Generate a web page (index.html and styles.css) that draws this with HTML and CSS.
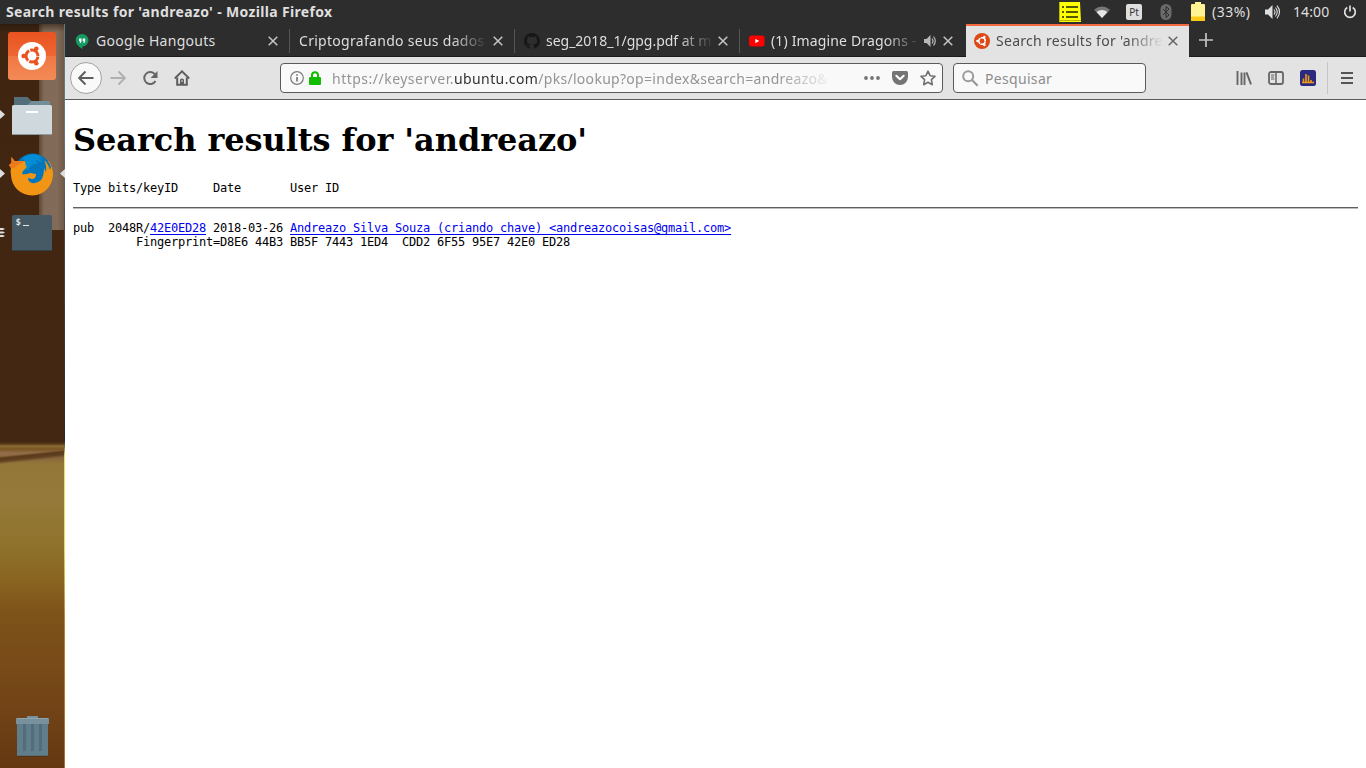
FILE: index.html
```html
<!DOCTYPE html>
<html lang="pt-BR">
<head>
<meta charset="utf-8">
<title>Search results for 'andreazo'</title>
<link rel="stylesheet" href="styles.css">
</head>
<body>
<svg class="defs" width="0" height="0">
  <symbol id="close" viewBox="0 0 10 10"><path d="M.7.7l8.6 8.6M9.3.7L.7 9.3" fill="none" stroke="currentColor" stroke-width="1.5"/></symbol>
  <symbol id="cof" viewBox="0 0 24 24">
    <circle cx="12" cy="12" r="6" fill="none" stroke="currentColor" stroke-width="3" stroke-dasharray="11.4 1.166" stroke-dashoffset="-.6"/>
    <g fill="currentColor" class="gapline" stroke-width="1"><circle cx="3.6" cy="12" r="2.3"/><circle cx="16.3" cy="4.8" r="2.3"/><circle cx="16.3" cy="19.2" r="2.3"/></g>
  </symbol>
</svg>

<header class="panel">
  <span class="wtitle">Search results for 'andreazo' - Mozilla Firefox</span>
  <svg class="note" width="22" height="20" viewBox="0 0 22 20"><path d="M1 0h20l1 20H0z" fill="#ff0"/><path d="M0 18.5h22M.5 0v20" stroke="#b9b900"/><path d="M7 5h12M7 10h12M7 15h12" stroke="#555b00" stroke-width="1.8"/><path d="M3 5h2M3 10h2M3 15h2" stroke="#555b00" stroke-width="1.8"/></svg>
  <svg class="wifi" width="16" height="12" viewBox="0 0 16 12"><path d="M0 3.7Q8-2.700 16 3.700L8 12z" fill="#777"/><path d="M2.500 6Q8 2 13.500 6L8 12z" fill="#e6e6e6"/></svg>
  <span class="kbd">Pt</span>
  <svg class="bt" width="12" height="16" viewBox="0 0 12 16"><rect x=".5" width="11" height="16" rx="5.500" fill="#6b6b6b"/><path d="M3 5l6 6-3 2.500v-11L9 5l-6 6" fill="none" stroke="#2d2d2d"/></svg>
  <svg class="bat" width="14" height="20" viewBox="0 0 14 20"><path d="M4 0h6v2h3q1 0 1 1v15q0 1-1 1H1q-1 0-1-1V3q0-1 1-1h3z" fill="#fff394"/><path d="M0 14.500h14V18q0 1-1 1H1q-1 0-1-1z" fill="#fbc916"/></svg>
  <span class="pct">(33%)</span>
  <svg class="vol" width="16" height="14" viewBox="0 0 16 14"><path d="M0 4.500h3L7.500 0v14L3 9.500H0z" fill="#dfdfdf"/><path d="M9 4.500q2 2.500 0 5M10.500 2.500q3.500 4.500 0 9M12 .7q5 6.300 0 12.600" fill="none" stroke="#dfdfdf" stroke-width="1.100"/></svg>
  <span class="clock">14:00</span>
  <svg class="power" width="14" height="14" viewBox="0 0 14 14"><path d="M4.300 2.500a5.300 5.300 0 1 0 5.400 0M7 .5v6" fill="none" stroke="#dfdfdf" stroke-width="1.700"/></svg>
</header>

<div class="desktop">
<nav class="launcher">
  <svg width="65" height="59" viewBox="0 0 65 59">
    <defs><linearGradient id="og" x2="0" y2="1"><stop stop-color="#ea531f"/><stop offset=".49" stop-color="#ed6634"/><stop offset=".51" stop-color="#f07743"/><stop offset="1" stop-color="#f38b56"/></linearGradient></defs>
    <rect x="8" y="5" width="48" height="48" rx="3" fill="url(#og)"/>
    <circle cx="32" cy="29" r="14" fill="#fff"/><svg class="orange" x="20" y="17" width="24" height="24"><use href="#cof"/></svg>
  </svg>
  <svg width="65" height="59" viewBox="0 0 65 59">
    <path d="M14 12q0-1 1-1h12l4 4h18q1 0 1 1v6H14z" fill="#738e99"/><path d="M14 12q0-1 1-1h12l4.500 4-4 4H14z" fill="#546e7a"/><rect x="12" y="19" width="40" height="30" rx="1.500" fill="#cfd8dc"/><path d="M12 48.500h40" stroke="#8d999f"/><path d="M26 26h12" stroke="#fff" stroke-width="2"/><path d="M0 24l5 4.500L0 33z" fill="#ddd"/>
  </svg>
  <svg width="65" height="59" viewBox="0 0 65 59">
    <path d="M11.500 12l3 4h34q4.500 6 4.500 13a21 21 0 0 1-42 1q-1-4 0-7l-2-3 2.500-2z" fill="#f29514"/>
    <path d="M18 16q6-7.500 14.500-7.500Q46 9 51 22l-1 3q-2-7-6-10 3 6 2 12l-2-4q0 8-3 12-4 4-9 3-4-1-4-5l4 1q4 0 4-5l-6-1q-5 2-8 1l1-3 4-4q-1-3-2-6z" fill="#0277bd"/>
    <path d="M22 14q5-4.500 11-4.500 6 0 10 4l-4-1 3 5-7-3 3 4q-6-1-10 6l-4 1 3-3q-3-3-1-6.500z" fill="#039be5" opacity=".65"/>
    <path d="M11.500 12l3 4h10l-6 4q-3 1-4 3H11l-2-3 2.500-2z" fill="#ef7a1c"/>
    <path d="M0 24l5 4.500L0 33zM65 24l-5 4.500 5 4.500z" fill="#ddd"/>
  </svg>
  <svg width="65" height="59" viewBox="0 0 65 59"><rect x="12" y="11" width="40" height="36" rx="1.500" fill="#455a64"/><path d="M12 46.500h40" stroke="#2f4047"/><text class="prompt" x="15.500" y="21">$</text><path d="M23 21.500h6" stroke="#e0e5e7"/><path d="M0 24h3l2 1-2 1H0zM0 27.500h3l2 1-2 1H0zM0 31h3l2 1-2 1H0z" fill="#ddd"/></svg>
  <svg class="trash" width="65" height="59" viewBox="0 0 65 59"><rect x="27" y="10" width="11" height="3" fill="#78909c"/><path d="M17 17h31v32q0 1-1 1H18q-1 0-1-1z" fill="#607d8b"/><path d="M16 13q0-1 1-1h31q1 0 1 1v5H16z" fill="#78909c"/><path d="M17 12.500h31" stroke="#90a4ae"/><path d="M24.500 18v27M32.500 18v27M40.500 18v27" stroke="#526d79" stroke-width="3"/><path d="M18 50.300h29" stroke="#4e3015"/></svg>
</nav>

<main class="browser">
  <div class="tabs">
    <div class="tab">
      <svg width="16" height="16" viewBox="0 0 16 16"><path d="M8 1a6.300 6.300 0 0 1 .4 12.600V16Q2 12.600 1.700 7.300A6.300 6.300 0 0 1 8 1z" fill="#159b61"/><path d="M5 5.500h2.500v3L6.500 10H5.600l.6-1.700H5zM8.700 5.500h2.500v3L10.200 10h-.9l.6-1.700H8.700z" fill="#fff"/></svg>
      <span class="label l1">Google Hangouts</span><svg class="x"><use href="#close"/></svg>
    </div>
    <div class="tab">
      <span class="label l2">Criptografando seus dados</span><svg class="x"><use href="#close"/></svg>
    </div>
    <div class="tab">
      <svg width="16" height="16" viewBox="0 0 16 16"><path fill="#171717" d="M8 0C3.580 0 0 3.580 0 8c0 3.540 2.290 6.530 5.470 7.590.4.070.55-.17.55-.38v-1.490c-2.230.49-2.700-.95-2.700-.95-.36-.92-.89-1.170-.89-1.170-.73-.5.060-.49.060-.49.8.060 1.230.83 1.230.83.710 1.220 1.870.87 2.330.66.070-.52.280-.87.510-1.070-1.780-.2-3.640-.89-3.640-3.950 0-.87.310-1.590.82-2.150-.08-.2-.36-1.020.08-2.120 0 0 .67-.21 2.200.82a7.700 7.700 0 0 1 4 0c1.530-1.040 2.200-.82 2.200-.82.440 1.100.16 1.920.08 2.120.51.56.82 1.270.82 2.150 0 3.070-1.870 3.750-3.650 3.950.29.25.54.73.54 1.480v2.200c0 .21.150.46.55.38A8 8 0 0 0 8 0z"/></svg>
      <span class="label l3">seg_2018_1/gpg.pdf at m</span><svg class="x"><use href="#close"/></svg>
    </div>
    <div class="tab">
      <svg width="16" height="16" viewBox="0 0 16 16"><rect x="0" y="2.500" width="15.500" height="11" rx="2.500" fill="red"/><path d="M6.300 5.700v4.600l4-2.300z" fill="#fff"/></svg>
      <span class="label l4">(1) Imagine Dragons -</span>
      <svg class="snd" width="14" height="12" viewBox="0 0 14 12"><path d="M0 4h2.500L6.500 0v12l-4-4H0z" fill="#b8b8b8"/><path d="M8 3.500q2 2.500 0 5M9.500 1.500q3.500 4.500 0 9" fill="none" stroke="#b8b8b8" stroke-width="1.200"/></svg><svg class="x"><use href="#close"/></svg>
    </div>
    <div class="tab active">
      <svg width="16" height="16" viewBox="0 0 16 16"><circle cx="8" cy="8" r="8" fill="#dd4814"/><svg class="white" x="1.500" y="1.500" width="13" height="13"><use href="#cof"/></svg></svg>
      <span class="label l5">Search results for 'andre</span><svg class="x"><use href="#close"/></svg>
    </div>
    <svg class="plus" width="14" height="14" viewBox="0 0 14 14"><path d="M7 0v14M0 7h14" stroke="#c4c4c4" stroke-width="1.700"/></svg>
  </div>

  <div class="toolbar">
    <span class="back"><svg width="16" height="16" viewBox="0 0 16 16"><path d="M15.500 8H1.500M7.500 1.500L1.200 8l6.300 6.500" fill="none" stroke="#5e5e5e" stroke-width="1.900"/></svg></span>
    <svg class="fwd" width="16" height="16" viewBox="0 0 16 16"><path d="M.5 8h14M8.500 1.500L14.800 8l-6.300 6.500" fill="none" stroke="#b0b0b0" stroke-width="1.900"/></svg>
    <svg class="gap" width="16" height="16" viewBox="0 0 16 16"><path d="M13 4.400A6 6 0 1 0 13.500 11" fill="none" stroke="#666" stroke-width="2"/><path d="M15.500 1v7h-7z" fill="#666"/></svg>
    <svg class="gap" width="16" height="16" viewBox="0 0 16 16"><path d="M.8 8.500L8 1.300l7.200 7.200" fill="none" stroke="#5e5e5e" stroke-width="1.900"/><path d="M3.200 7.500v7.300h9.600V7.500" fill="none" stroke="#5e5e5e" stroke-width="2"/><path d="M6 15v-5q0-1.500 2-1.500t2 1.500v5z" fill="#5e5e5e"/><path d="M8 10v2" stroke="#ddd"/></svg>
    <div class="url">
      <svg width="14" height="14" viewBox="0 0 14 14"><circle cx="7" cy="7" r="6.300" fill="none" stroke="#7b7b7b" stroke-width="1.200"/><path d="M7 6v4.500M7 3.300v1.500" stroke="#777" stroke-width="1.700"/></svg>
      <svg class="lock" width="12" height="14" viewBox="0 0 12 14"><path d="M3 7V4.200a3 3 0 0 1 6 0V7" fill="none" stroke="#12bc00" stroke-width="2"/><rect y="6" width="12" height="8" rx="1" fill="#12bc00"/></svg>
      <span class="addr"><span class="sub">https://keyserver.</span><b>ubuntu.com</b>/pks/lookup?op=index&amp;search=andreazo&amp;</span>
      <svg width="16" height="16" viewBox="0 0 16 16" fill="#747474"><circle cx="2" cy="8" r="1.900"/><circle cx="8" cy="8" r="1.900"/><circle cx="14" cy="8" r="1.900"/></svg>
      <svg class="pocket" width="16" height="16" viewBox="0 0 16 16"><path d="M1.500 1h13Q16 1 16 2.500V7a8 8 0 0 1-16 0V2.500Q0 1 1.500 1z" fill="#747474"/><path d="M4.300 5.800L8 9.300l3.700-3.500" fill="none" stroke="#fff" stroke-width="2" stroke-linecap="round" stroke-linejoin="round"/></svg>
      <svg class="star" width="16" height="16" viewBox="0 0 16 16"><path d="M8 1.200l2.100 4.500 4.900.6-3.600 3.400.9 5L8 12.300l-4.300 2.400.9-5L1 6.300l4.900-.6z" fill="none" stroke="#717171" stroke-width="1.600" stroke-linejoin="round"/></svg>
    </div>
    <div class="search"><svg width="17" height="17" viewBox="0 0 17 17"><circle cx="6.200" cy="6.200" r="5" fill="none" stroke="#9a9a9a" stroke-width="2"/><path d="M9.700 9.700l6 6" stroke="#9a9a9a" stroke-width="2.300"/></svg><span>Pesquisar</span></div>
    <svg class="lib" width="16" height="16" viewBox="0 0 16 16"><path d="M1.500 1v14M5.500 2.500V15M8.500 2.500V15M10.500 2.300l4.500 12" fill="none" stroke="#666" stroke-width="1.900"/></svg>
    <svg class="gap" width="16" height="16" viewBox="0 0 16 16"><rect x="1" y="2" width="14" height="12" rx="2" fill="none" stroke="#666" stroke-width="1.800"/><path d="M8 2v12" stroke="#666" stroke-width="1.500"/><path d="M3 5h3.500M3 7h3M3 9h3.500" stroke="#666"/></svg>
    <svg class="gap" width="16" height="16" viewBox="0 0 16 16"><rect width="16" height="16" rx="2.500" fill="#2a2a7e"/><path d="M2 12.500h12M3.500 12V8.500M6 12V4M8.500 12V5.500M11 12v-2" stroke="#f39a13" stroke-width="1.600"/></svg>
    <i class="sep"></i>
    <svg width="12" height="12" viewBox="0 0 12 12"><path d="M0 1h12M0 6h12M0 11h12" stroke="#555" stroke-width="1.900"/></svg>
  </div>

  <article class="page">
    <h1>Search results for 'andreazo'</h1>
<pre>Type bits/keyID     Date       User ID</pre>
    <hr>
<pre>pub  2048R/<a href="#">42E0ED28</a> 2018-03-26 <a href="#">Andreazo Silva Souza (criando chave) &lt;andreazocoisas@gmail.com&gt;</a>
         Fingerprint=D8E6 44B3 BB5F 7443 1ED4  CDD2 6F55 95E7 42E0 ED28</pre>
  </article>
</main>
</div>
</body>
</html>
```
FILE: styles.css
```css
* { box-sizing: border-box; }
body { margin: 0; width: 1366px; height: 768px; overflow: hidden; background: #fff; font: 14px/20px "Noto Sans", sans-serif; }
svg { flex: none; display: block; }
.defs { position: absolute; }
.orange { color: #e95420; }
.orange .gapline { stroke: #fff; }
.white { color: #fff; }

.panel { height: 24px; background: #2d2d2d; color: #dfdfdf; display: flex; align-items: center; white-space: nowrap; }
.wtitle { font-weight: bold; width: 1053px; padding-left: 6px; letter-spacing: .34px; }
.note { margin-left: 6px; }
.wifi { margin-left: 13px; }
.kbd { width: 16px; height: 16px; margin-left: 16px; border-radius: 2px; background: #dfdfdf; color: #333; font-size: 10px; line-height: 16px; text-align: center; }
.bt { margin-left: 18px; }
.bat { margin-left: 19px; }
.pct { margin-left: 7px; width: 53px; letter-spacing: .5px; }
.clock { margin-left: 12px; width: 50px; letter-spacing: .1px; }

.desktop { display: flex; height: 744px; }
.launcher { width: 65px; padding-top: 3px; display: flex; flex-direction: column; border-right: 1px solid #6c6355;
  background:
    linear-gradient(#1d140d88, transparent) 0 0 / 65px 8px no-repeat,
    linear-gradient(90deg, #5d4633, #816a57 5px, #826b58 18px, #6c5847) 39px 0 / 26px 206px no-repeat,
    linear-gradient(174deg, transparent 42%, #5a3a18 50%, #5e4020 60%, transparent 72%) 0 421px / 65px 20px no-repeat,
    linear-gradient(#402511 0, #432713 418px, #5a3c16 420px, #8c6a32 422px, #795522 425px, #936d4a 429px, #8a673c 434px, #937739 440px, #94793a 475px, #8f732c 520px, #886220 560px, #7e5319 590px, #784b18 640px, #704216 690px, #663812 744px);
  border-image: linear-gradient(#667981 0, #667981 14%, #51483f 28%, #202a32 56%, #e8e269 58%, #e7dd5c 70%, #b9853d 80%, #a97136) 1; }
.trash { margin-top: auto; margin-bottom: 3px; }
.prompt { font: bold 9px "DejaVu Sans Mono", monospace; fill: #e0e5e7; }

.browser { width: 1301px; }
.tabs { height: 33px; background: #2d2d2d; box-shadow: inset 0 -1px #1b1b1b; display: flex; align-items: center; color: #dedede; }
.tab { width: 225px; height: 33px; padding: 1px 11px 0 9px; display: flex; align-items: center; position: relative; letter-spacing: .29px; }
.tab:not(.active)::after { content: ""; position: absolute; right: 0; top: 5px; width: 1px; height: 24px; background: #555; }
.tab:nth-child(4)::after { display: none; }
.tab > svg:first-child { margin-right: 6px; }
.label { white-space: nowrap; overflow: hidden; flex: 1; margin-right: 5px; }
.l2, .l3, .l4, .l5 { -webkit-mask-image: linear-gradient(90deg, #000 calc(100% - 36px), transparent); mask-image: linear-gradient(90deg, #000 calc(100% - 36px), transparent); }
.l3 { letter-spacing: -.02px; margin-right: 4px; }
.l4 { letter-spacing: .15px; margin-right: 3px; }
.x { width: 10px; height: 10px; color: #c6c6c6; margin-right: 1px; }
.snd { margin-right: 5px; }
.active { width: 223px; margin-left: 1px; padding: 1px 10px 0 8px; background: #e3e3e3; color: #4c4c4c; box-shadow: inset 0 2px #f46b41; }
.active .x { color: #666; }
.plus { margin-left: 10px; margin-bottom: 1px; }

.toolbar { height: 43px; background: #e3e3e3; border-bottom: 1px solid #5c5c5c; display: flex; align-items: center; padding-left: 5px; }
.back { width: 32px; height: 32px; border: 1px solid #a1a1a1; border-radius: 50%; background: #f9f9f9; display: grid; place-items: center; }
.fwd { margin-left: 8px; }
.gap { margin-left: 16px; }
.url, .search { height: 30px; border: 1px solid #5a5a5a; border-radius: 4px; background: #f9f9f9; display: flex; align-items: center; }
.url { width: 663px; margin-left: 90px; padding-left: 9px; }
.lock { margin-left: 5px; }
.addr { margin: 0 31px 0 11px; padding-top: 1px; width: 501px; color: #949494; letter-spacing: .29px; white-space: nowrap; overflow: hidden; -webkit-mask-image: linear-gradient(90deg, #000 445px, transparent 501px); mask-image: linear-gradient(90deg, #000 445px, transparent 501px); }
.addr .sub { letter-spacing: .49px; }
.addr b { color: #333; font-weight: normal; letter-spacing: .4px; }
.pocket, .star { margin-left: 12px; }
.search { width: 193px; margin-left: 10px; padding-left: 8px; color: #8d8d8d; letter-spacing: .32px; }
.search span { margin-left: 6px; padding-top: 1px; }
.lib { margin-left: 90px; }
.sep { width: 1px; height: 32px; margin: 0 13px 0 11px; background: #c6c6c6; }

.page { padding: 0 8px; color: #000; }
h1 { margin: 21px 0 22px; font: bold 32px/38px "DejaVu Serif", serif; letter-spacing: -.07px; white-space: nowrap; }
pre { margin: 0; font: 12px/14px "DejaVu Sans Mono", monospace; letter-spacing: -.224px; }
hr { margin: 12px 0; height: 2px; border: 0; border-top: 1px solid #606060; border-bottom: 1px solid #bcbcbc; }
a { color: #0000ee; text-underline-offset: 2px; text-decoration-thickness: 1px; text-decoration-skip-ink: none; }
```
